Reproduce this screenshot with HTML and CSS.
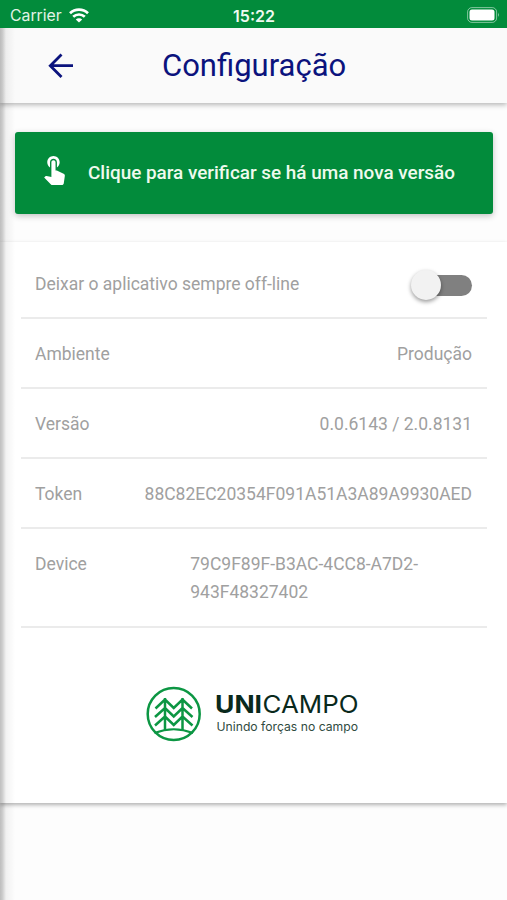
FILE: index.html
```html
<!DOCTYPE html>
<html lang="pt-BR">
<head>
<meta charset="utf-8">
<title>Configuração</title>
<link rel="stylesheet" href="styles.css">
</head>
<body>
<div class="screen">
  <div class="status">
    <div class="status-left"><span class="carrier">Carrier</span>
      <svg class="wifi" width="20" height="15" viewBox="0 0 20 15" fill="none" stroke="#fff" stroke-width="2.7"><path d="M1 5.3a13 13 0 0 1 18 0"/><path d="M4.2 8.8a8.4 8.4 0 0 1 11.6 0"/><path d="M10 14.6L6.8 11.5a4.6 4.6 0 0 1 6.4 0z" fill="#fff" stroke="none"/></svg>
    </div>
    <span class="clock">15:22</span>
    <svg class="battery" width="33" height="16" viewBox="0 0 33 16"><rect x=".6" y=".6" width="29" height="14.8" rx="4.3" fill="none" stroke="#fff" stroke-opacity=".5"/><rect x="2.5" y="2.5" width="25" height="11" rx="2.5" fill="#fff"/><path d="M31 5.5q1.7 2.3 0 4.6z" fill="#fff" fill-opacity=".6"/></svg>
  </div>
  <header class="header">
    <svg class="back" width="26" height="26" viewBox="0 0 26 26" fill="none" stroke="#0b137d" stroke-width="2.8"><path d="M25 12.700H2.3M13.500 1.500L2.300 12.700 13.500 24"/></svg>
    <h1 class="title">Configuração</h1>
  </header>
  <section class="update">
    <button class="update-button">
      <svg class="touch" width="21" height="29" viewBox="4.75 3 15 21" fill="#fff"><path d="M9 11.24V7.5C9 6.12 10.12 5 11.5 5S14 6.12 14 7.5v3.74c1.21-.81 2-2.18 2-3.74C16 5.01 13.99 3 11.5 3S7 5.01 7 7.5c0 1.56.79 2.93 2 3.74zm9.84 4.63l-4.54-2.26c-.17-.07-.35-.11-.54-.11H13v-6c0-.83-.67-1.5-1.5-1.5S10 6.67 10 7.5v10.74l-3.43-.72c-.08-.01-.15-.03-.24-.03-.31 0-.59.13-.79.33l-.79.8 4.94 4.94c.27.27.65.44 1.06.44h6.79c.75 0 1.33-.55 1.44-1.28l.75-5.27c.01-.07.02-.14.02-.2 0-.62-.38-1.16-.91-1.38z"/></svg>
      <span class="update-label">Clique para verificar se há uma nova versão</span>
    </button>
  </section>
  <main class="card">
    <div class="row first"><span>Deixar o aplicativo sempre off-line</span><span class="switch"><span class="knob"></span></span></div>
    <div class="row"><span>Ambiente</span><span>Produção</span></div>
    <div class="row"><span>Versão</span><span>0.0.6143 / 2.0.8131</span></div>
    <div class="row"><span>Token</span><span class="token">88C82EC20354F091A51A3A89A9930AED</span></div>
    <div class="row device"><span>Device</span><span class="device-id">79C9F89F-B3AC-4CC8-A7D2-<br>943F48327402</span></div>
    <div class="brand">
      <svg class="logo" width="220" height="60" viewBox="144 684 220 60">
        <g fill="none" stroke="#0c9643" stroke-width="2.5">
          <circle cx="173.700" cy="714" r="26"/>
          <path d="M154.500 733Q173.700 725.500 193 733" stroke-width="2.200"/>
          <path d="M165 698v33M182.500 698v33M155.500 708.500l9.500-9 8.750 8.500 8.750-8.500 9.500 9M155 717l10-9 8.750 8.500 8.750-8.500 10 9M155 725.500l10-9 8.750 8.500 8.750-8.500 10 9"/>
        </g>
        <g class="brand-text">
          <text x="215" y="713" class="brand-bold" textLength="47" lengthAdjust="spacingAndGlyphs">UNI</text>
          <text x="262.500" y="713" class="brand-light" textLength="96" lengthAdjust="spacingAndGlyphs">CAMPO</text>
          <text x="216.500" y="731" class="brand-tag" textLength="141.500" lengthAdjust="spacingAndGlyphs">Unindo forças no campo</text>
        </g>
      </svg>
    </div>
  </main>
  <div class="edge"></div>
</div>
</body>
</html>
```
FILE: styles.css
```css
* { box-sizing: border-box; }
body { margin: 0; font-family: Roboto, sans-serif; background: #fff; }
.screen { position: relative; height: 900px; overflow: hidden; display: flex; flex-direction: column; background: #fdfdfd; }
.status { height: 28px; flex: none; background: #028b3b; color: #fff; display: grid; grid-template-columns: 1fr auto 1fr; align-items: center; padding: 0 7px 0 10px; z-index: 4; font-family: Inter, sans-serif; }
.status-left { display: flex; align-items: center; gap: 7px; }
.wifi { margin-top: 0; }
.carrier { font-size: 15.8px; line-height: 28px; padding-top: 2px; color: #e2f3e6; }
.clock { font-size: 16px; font-weight: 600; line-height: 28px; padding-top: 1px; margin-left: -2px; color: #effaf0; }
.battery { justify-self: end; margin-top: -1px; }
.header { height: 75px; flex: none; background: #fafafa; display: flex; align-items: center; padding-left: 48px; box-shadow: 0 2px 5px rgba(0,0,0,.28); z-index: 2; }
.back { flex: none; }
.title { margin: 1px 0 0 88px; font-size: 31px; font-weight: 400; line-height: 40px; color: #0b137d; }
.update { height: 139px; flex: none; padding: 29px 14px 0 15px; }
.update-button { width: 100%; height: 82px; border: 0; border-radius: 3px; background: #028b3b; display: flex; align-items: center; padding: 0 0 0 29px; box-shadow: 0 2px 6px rgba(0,0,0,.24); }
.touch { margin-top: -5px; }
.update-label { margin-left: 23px; font: 500 18.9px/24px Roboto, sans-serif; color: #effaed; white-space: nowrap; }
.card { height: 561px; flex: none; background: #fff; padding: 0 20px 0 21px; box-shadow: 0 2px 4px rgba(0,0,0,.3); color: #a0a0a0; font-size: 17.5px; line-height: 28px; }
.row { height: 70px; border-bottom: 2px solid #ebebeb; padding: 21px 15px 0 14px; display: flex; justify-content: space-between; white-space: nowrap; }
.first { height: 77px; padding-top: 28px; }
.device { height: 99px; }
.device-id { margin-right: 54px; }
.switch { position: relative; width: 46px; height: 21px; margin-top: 5px; border-radius: 11px; background: #808080; }
.knob { position: absolute; left: -15px; top: -5px; width: 30px; height: 30px; border-radius: 50%; background: #f2f2f2; box-shadow: 0 2px 4px rgba(0,0,0,.4); }
.brand { display: flex; padding: 56px 0 0 123px; }
.logo { flex: none; overflow: visible; }
.brand-text { font-family: Inter, sans-serif; fill: #09291c; }
.brand-bold { font-size: 24px; font-weight: 700; }
.brand-light { font-size: 24px; font-weight: 400; }
.brand-tag { font-size: 12px; fill: #304b3f; }
.edge { position: absolute; left: 0; top: 28px; width: 15px; height: 872px; z-index: 3; background: linear-gradient(90deg, rgba(0,0,0,.25), rgba(0,0,0,.2) 15%, rgba(0,0,0,.05) 40%, rgba(0,0,0,0)); }
```
